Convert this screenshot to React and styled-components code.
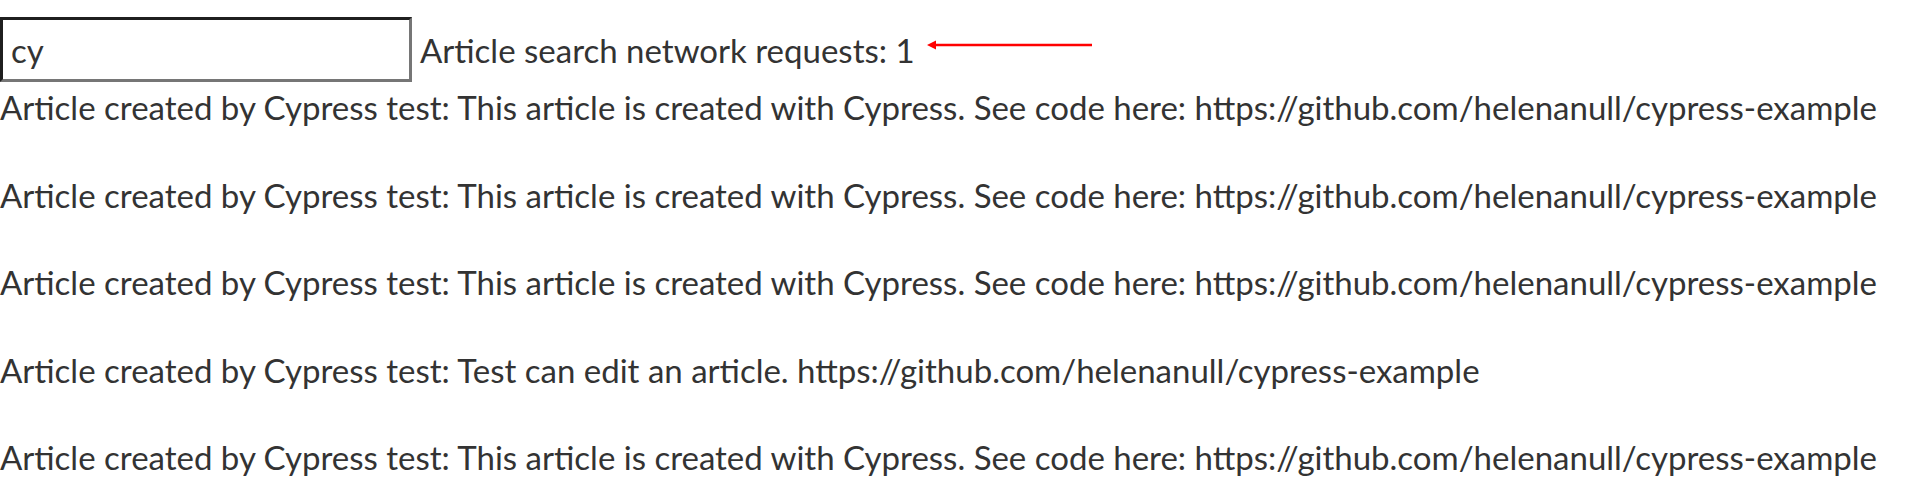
import styled, { createGlobalStyle } from "styled-components";

const GlobalStyle = createGlobalStyle`
  body {
    margin: 0;
    background: #ffffff;
    color: #333333;
    font-family: "Lato", "Open Sans", sans-serif;
  }
`;

const articles = [
    "Article created by Cypress test: This article is created with Cypress. See code here: https://github.com/helenanull/cypress-example",
    "Article created by Cypress test: This article is created with Cypress. See code here: https://github.com/helenanull/cypress-example",
    "Article created by Cypress test: This article is created with Cypress. See code here: https://github.com/helenanull/cypress-example",
    "Article created by Cypress test: Test can edit an article. https://github.com/helenanull/cypress-example",
    "Article created by Cypress test: This article is created with Cypress. See code here: https://github.com/helenanull/cypress-example",
];

const App = () => {
    return (
        <Page>
            <GlobalStyle />
            <SearchBar>
                <SearchInput defaultValue="cy" />
                <RequestCount>Article search network requests: 1</RequestCount>
                <Arrow width="166" height="12" viewBox="0 0 166 12">
                    <line x1="4" y1="6" x2="165" y2="6" stroke="#ff0000" strokeWidth="2.5" />
                    <path d="M0 6 L9 1.5 L9 10.5 Z" fill="#ff0000" />
                </Arrow>
            </SearchBar>
            <ArticleList>
                {articles.map((text, i) => (
                    <ArticleRow key={i}>{text}</ArticleRow>
                ))}
            </ArticleList>
        </Page>
    );
}

const Page = styled.div`
  padding-top: 17px;
  font-size: 33px;
`;

const SearchBar = styled.div`
  display: flex;
  align-items: baseline;
  gap: 8px;
  height: 65px;
`;

const SearchInput = styled.input`
  box-sizing: border-box;
  width: 412px;
  height: 65px;
  margin: 0;
  padding: 0 8px;
  font-family: inherit;
  font-size: 33px;
  color: #333333;
  background: #fff;
  border-style: solid;
  border-width: 3px;
  border-color: #1f1f1f #767676 #767676 #1f1f1f;
  outline: none;
`;

const RequestCount = styled.span`
  white-space: nowrap;
`;

const Arrow = styled.svg`
  align-self: flex-start;
  margin-top: 22px;
  margin-left: 4px;
  flex-shrink: 0;
`;

const ArticleList = styled.div`
  display: flex;
  flex-direction: column;
  gap: 47.6px;
  margin-top: 5px;
`;

const ArticleRow = styled.div`
  white-space: nowrap;
  line-height: 40px;
`;

export default App;
